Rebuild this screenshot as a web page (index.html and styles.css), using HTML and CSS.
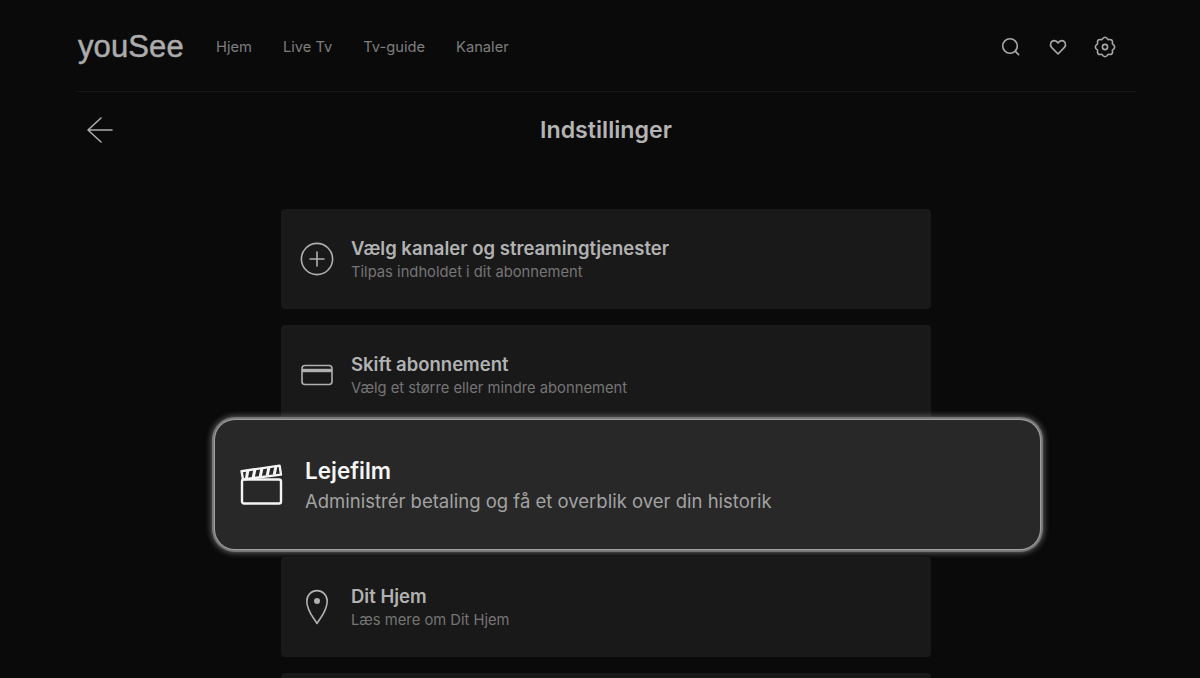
FILE: index.html
```html
<!DOCTYPE html>
<html lang="da">
<head>
    <meta charset="UTF-8">
    <meta name="viewport" content="width=device-width, initial-scale=1.0">
    <title>Indstillinger</title>
    <link rel="stylesheet" href="styles.css">
</head>
<body>
    <div class="page">
        <header class="topbar">
            <div class="logo">youSee</div>
            <nav class="nav">
                <a>Hjem</a>
                <a>Live Tv</a>
                <a>Tv-guide</a>
                <a>Kanaler</a>
            </nav>
            <div class="tools">
                <svg width="24" height="24" viewBox="0 0 24 24"><circle cx="11" cy="11" r="7.3"/><path d="M16.4 16.4 19.6 19.6"/></svg>
                <svg width="24" height="24" viewBox="0 0 24 24"><path d="M12 19 5.6 12.4C3.2 9.8 5 5.6 8.2 5.6 10 5.6 11.2 6.6 12 8 12.8 6.6 14 5.6 15.8 5.6 19 5.6 20.8 9.8 18.4 12.4Z"/></svg>
                <svg width="24" height="24" viewBox="0 0 24 24"><path d="M19.39 15.06Q20.49 20.49 15.06 19.39 12 24 8.94 19.39 3.51 20.49 4.61 15.06 0 12 4.61 8.94 3.51 3.51 8.94 4.61 12 0 15.06 4.61 20.49 3.51 19.39 8.94 24 12 19.39 15.06Z"/><circle cx="12" cy="12" r="2.6"/></svg>
            </div>
        </header>

        <div class="titlebar">
            <svg class="back" width="28" height="28" viewBox="0 0 28 28"><path d="M26 14H2M15 2 2 14 15 26"/></svg>
            <h1>Indstillinger</h1>
        </div>

        <main class="list">
            <div class="row">
                <div class="slot">
                    <svg width="34" height="34" viewBox="0 0 34 34"><circle cx="17" cy="17" r="15.6"/><path d="M17 10v14M10 17h14"/></svg>
                </div>
                <div class="row-text">
                    <div class="row-title">Vælg kanaler og streamingtjenester</div>
                    <div class="row-sub">Tilpas indholdet i dit abonnement</div>
                </div>
            </div>

            <div class="row">
                <div class="slot">
                    <svg width="32" height="22" viewBox="0 0 32 22"><rect x="1" y="1.5" width="30" height="19" rx="3"/><path class="band" d="M1 6.5h30"/></svg>
                </div>
                <div class="row-text">
                    <div class="row-title">Skift abonnement</div>
                    <div class="row-sub">Vælg et større eller mindre abonnement</div>
                </div>
            </div>

            <div class="row row-has-focus">
                <div class="focus-card">
                    <div class="slot focus-slot">
                        <svg width="44" height="42" viewBox="0 0 44 42"><rect x="2" y="15.5" width="39" height="24" rx="2"/><path d="M1.6 7.2 39.6 1.6 41 10.6 3 15.5Z"/><path class="stripes" d="M8 5.8 6.4 14.4M15 5 13.2 13.6M22 4 20.2 12.6M29 3 27.2 11.6M36 2 34.2 10.8"/></svg>
                    </div>
                    <div class="focus-text">
                        <div class="focus-title">Lejefilm</div>
                        <div class="focus-sub">Administrér betaling og få et overblik over din historik</div>
                    </div>
                </div>
            </div>

            <div class="row">
                <div class="slot">
                    <svg width="24" height="36" viewBox="0 0 24 36"><path d="M12 34.5C8 28 1.8 21.5 1.8 12.2 1.8 6 6.4 1.6 12 1.6S22.2 6 22.2 12.2C22.2 21.5 16 28 12 34.5Z"/><circle class="dot" cx="12" cy="12" r="3"/></svg>
                </div>
                <div class="row-text">
                    <div class="row-title">Dit Hjem</div>
                    <div class="row-sub">Læs mere om Dit Hjem</div>
                </div>
            </div>

            <div class="row row-cut"></div>
        </main>
    </div>
</body>
</html>
```

FILE: styles.css
```css
html, body {
    height: 100%;
}
body {
    margin: 0;
    overflow: hidden;
    background: #0a0a0a;
    color: #b4b4b4;
    font-family: Inter, "Noto Sans", sans-serif;
}
svg {
    display: block;
    fill: none;
    stroke: currentColor;
    stroke-width: 1.6;
    stroke-linejoin: round;
    stroke-linecap: round;
}
.page {
    padding: 0 64px 0 76px;
}

/* top bar */
.topbar {
    display: flex;
    align-items: center;
    height: 92px;
    padding-top: 2px;
    box-sizing: border-box;
    border-bottom: 1px solid #161616;
}
.logo {
    width: 140px;
    padding-left: 2px;
    box-sizing: border-box;
    font-family: "Liberation Sans", Arial, sans-serif;
    font-size: 31px;
    letter-spacing: 0.1px;
    color: #acacac;
    -webkit-text-stroke: 0.5px #acacac;
}
.nav {
    display: flex;
    gap: 31px;
    font-size: 14.7px;
    color: #7e7e7e;
}
.tools {
    display: flex;
    gap: 23px;
    margin-left: auto;
    margin-right: 19px;
    color: #a8a8a8;
}

/* heading */
.titlebar {
    position: relative;
    display: flex;
    justify-content: center;
    align-items: center;
    height: 78px;
}
.titlebar h1 {
    margin: 0 0 2px;
    font-size: 23.2px;
    font-weight: 600;
    color: #b4b4b4;
}
.back {
    position: absolute;
    left: 10px;
    top: 24px;
    color: #acacac;
}

/* settings list */
.list {
    display: flex;
    flex-direction: column;
    gap: 16px;
    width: 650px;
    margin: 39px 0 0 205px;
}
.row {
    display: flex;
    align-items: center;
    flex: none;
    height: 100px;
    background: #191919;
    border-radius: 4px;
}
.row-cut {
    height: 5px;
    border-radius: 4px 4px 0 0;
}
.row-has-focus {
    position: relative;
}
.row-text {
    padding-top: 1px;
}
.slot {
    display: flex;
    justify-content: center;
    flex: none;
    width: 71px;
    margin-right: -1px;
    color: #b0b0b0;
}
.band {
    stroke-width: 3.4;
    stroke-linecap: butt;
}
.dot {
    fill: currentColor;
    stroke: none;
}
.row-title {
    font-size: 18.5px;
    font-weight: 600;
    line-height: 22px;
    color: #b2b2b2;
}
.row-sub {
    margin-top: 2px;
    font-size: 14.75px;
    line-height: 22px;
    color: #757575;
}

/* focused item, sits on top of the row */
.focus-card {
    position: absolute;
    top: -21px;
    left: -66px;
    width: 825px;
    height: 129px;
    display: flex;
    align-items: center;
    background: #282828;
    border-radius: 20px;
    box-shadow: 0 0 0 1px #a0a0a0, 0 0 1px 3px #7c7c7c, 0 0 5px 5px rgba(120, 120, 120, 0.55);
}
.focus-slot {
    width: 90px;
    margin-right: 0;
    padding-left: 4px;
    box-sizing: border-box;
    color: #f4f4f4;
}
.focus-slot svg {
    stroke-width: 2.4;
}
.focus-slot .stripes {
    stroke-width: 3;
    stroke-linecap: butt;
}
.focus-text {
    padding-top: 2px;
}
.focus-title {
    font-size: 22.5px;
    font-weight: 600;
    line-height: 30px;
    color: #f5f5f5;
}
.focus-sub {
    font-size: 18.5px;
    line-height: 30px;
    color: #a2a2a2;
}
```
